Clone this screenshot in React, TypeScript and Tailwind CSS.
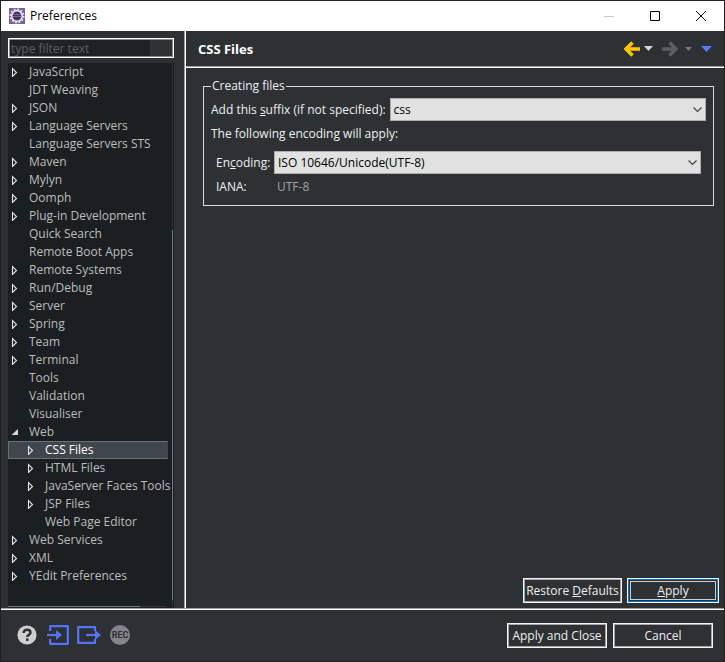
import type { ReactNode } from 'react'

type Node = {
  label: string
  state?: 'closed' | 'open'
  child?: boolean
  selected?: boolean
}

const NODES: Node[] = [
  { label: 'JavaScript', state: 'closed' },
  { label: 'JDT Weaving' },
  { label: 'JSON', state: 'closed' },
  { label: 'Language Servers', state: 'closed' },
  { label: 'Language Servers STS' },
  { label: 'Maven', state: 'closed' },
  { label: 'Mylyn', state: 'closed' },
  { label: 'Oomph', state: 'closed' },
  { label: 'Plug-in Development', state: 'closed' },
  { label: 'Quick Search' },
  { label: 'Remote Boot Apps' },
  { label: 'Remote Systems', state: 'closed' },
  { label: 'Run/Debug', state: 'closed' },
  { label: 'Server', state: 'closed' },
  { label: 'Spring', state: 'closed' },
  { label: 'Team', state: 'closed' },
  { label: 'Terminal', state: 'closed' },
  { label: 'Tools' },
  { label: 'Validation' },
  { label: 'Visualiser' },
  { label: 'Web', state: 'open' },
  { label: 'CSS Files', state: 'closed', child: true, selected: true },
  { label: 'HTML Files', state: 'closed', child: true },
  { label: 'JavaServer Faces Tools', state: 'closed', child: true },
  { label: 'JSP Files', state: 'closed', child: true },
  { label: 'Web Page Editor', child: true },
  { label: 'Web Services', state: 'closed' },
  { label: 'XML', state: 'closed' },
  { label: 'YEdit Preferences', state: 'closed' },
]

function Twisty({ state }: { state?: Node['state'] }) {
  return (
    <svg width="8" height="10" viewBox="0 0 8 10" className="shrink-0">
      {state === 'closed' && <path d="M1.5 1.5v8l4-4z" fill="none" stroke="#e4e4e4" strokeWidth="1.1" />}
      {state === 'open' && <path d="M7 2v6H.5z" fill="#d8d8d8" />}
    </svg>
  )
}

function TreeRow({ node }: { node: Node }) {
  return (
    <li role="treeitem" aria-selected={!!node.selected}>
      <button
        className={`flex h-[18px] w-40 items-center gap-[10px] border text-left leading-4 whitespace-nowrap ${
          node.child ? 'pl-[18px]' : 'pl-[2px]'
        } ${
          node.selected
            ? 'border-[#67737b] border-r-transparent bg-[#3f464c] text-white'
            : 'border-transparent text-[#bdbdbd]'
        }`}
      >
        <Twisty state={node.state} />
        {node.label}
      </button>
    </li>
  )
}

function DialogButton({ children, className }: { children: ReactNode; className: string }) {
  return (
    <button className={`h-[25px] border border-[#f4f4f4] whitespace-nowrap ${className}`}>
      <span className="flex h-full items-center justify-center border border-[#a8a5a2]">
        <span>{children}</span>
      </span>
    </button>
  )
}

function Combo({ id, value }: { id: string; value: string }) {
  return (
    <div className="grid h-[23px] min-w-0 flex-1">
      <select
        id={id}
        className="col-start-1 row-start-1 w-full appearance-none border border-[#adadad] bg-[#e1e1e1] px-[3px] text-black"
      >
        <option>{value}</option>
      </select>
      <svg
        width="9"
        height="6"
        viewBox="0 0 9 6"
        className="pointer-events-none col-start-1 row-start-1 mr-1 self-center justify-self-end"
      >
        <path d="M.5.5l4 4 4-4" fill="none" stroke="#444" strokeWidth="1.2" />
      </svg>
    </div>
  )
}

export default function App() {
  return (
    <div className="flex min-h-screen flex-col border border-[#231f20] bg-[#2d3134] font-['Open_Sans',sans-serif] text-[12px] leading-4 text-[#eeeeee]">
      {/* Title bar */}
      <header className="flex h-[30px] items-center bg-white pl-2 text-black">
        <svg width="16" height="16" viewBox="0 0 16 16">
          <rect width="16" height="16" fill="#75609b" />
          <circle cx="8" cy="8" r="6.6" fill="none" stroke="#e4e0ea" strokeWidth="1.8" strokeDasharray="1.9 1.55" />
          <circle cx="8" cy="8" r="5.2" fill="#40315f" stroke="#efecf3" strokeWidth="1.5" />
          <path d="M4 6.5h8M3.8 8.5h8.4" stroke="#786c96" />
        </svg>
        <h1 className="ml-[5px] flex-1">Preferences</h1>
        <button aria-label="Minimize" className="flex w-[46px] justify-center">
          <svg width="10" height="10" viewBox="0 0 10 10">
            <path d="M0 5.5h10" stroke="#c8c8c8" />
          </svg>
        </button>
        <button aria-label="Maximize" className="flex w-[46px] justify-center">
          <svg width="10" height="10" viewBox="0 0 10 10">
            <path d="M.5.5h9v9h-9z" fill="none" stroke="#000" />
          </svg>
        </button>
        <button aria-label="Close" className="flex w-[46px] justify-center">
          <svg width="10" height="10" viewBox="0 0 10 10">
            <path d="M0 0l10 10M10 0L0 10" stroke="#000" />
          </svg>
        </button>
      </header>

      <div className="flex flex-1">
        {/* Page tree */}
        <aside className="flex w-[184px] shrink-0 flex-col gap-[5px] border-r border-[#a0a0a0] pt-[7px] pr-[10px] pl-[7px]">
          <input
            type="text"
            aria-label="Filter"
            placeholder="type filter text"
            className="h-5 w-full shrink-0 border border-white bg-[linear-gradient(to_right,#1f2224_86%,#2d3134_86%)] px-[2px] shadow-[inset_0_0_0_1px_#8c8c8c] placeholder:text-[#5e5e5e]"
          />
          <div className="flex flex-1 flex-col bg-[#1b1f21] pb-px">
            <div className="flex flex-1">
              <ul role="tree" className="flex-1 pb-[21px]">
                {NODES.map((node) => (
                  <TreeRow key={node.label} node={node} />
                ))}
              </ul>
              <div className="mr-px w-px bg-[#2d3134] pt-[167px] pb-[6px]">
                <div className="h-full bg-[#6f7b83]" />
              </div>
            </div>
            <div className="mr-2 h-px bg-[#33383b]">
              <div className="h-full w-5/6 bg-[#6f7b83]" />
            </div>
          </div>
        </aside>

        {/* Selected page */}
        <main className="flex min-w-0 flex-1 flex-col border-l border-white">
          <div className="flex h-9 items-center border-b border-[#a0a0a0] pr-3 pl-3">
            <h2 className="flex-1 pt-px text-[13px] font-bold text-white">CSS Files</h2>
            <nav className="flex items-center">
              <button aria-label="Back">
                <svg width="16" height="16" viewBox="0 0 16 16">
                  <path d="M8.5 1.5L2 8l6.5 6.5M2.5 8H16" fill="none" stroke="#ffc400" strokeWidth="3.6" />
                </svg>
              </button>
              <button aria-label="Back history" className="ml-1">
                <svg width="9" height="5" viewBox="0 0 9 5">
                  <path d="M0 0h9L4.5 5z" fill="#d4d6d8" />
                </svg>
              </button>
              <button aria-label="Forward" className="ml-[9px]">
                <svg width="16" height="16" viewBox="0 0 16 16">
                  <path d="M7.5 1.5L14 8l-6.5 6.5M13.5 8H0" fill="none" stroke="#5a5d65" strokeWidth="3.6" />
                </svg>
              </button>
              <button aria-label="Forward history" className="ml-[7px]">
                <svg width="7" height="4" viewBox="0 0 7 4">
                  <path d="M0 0h7L3.5 4z" fill="#777" />
                </svg>
              </button>
              <button aria-label="View menu" className="ml-[9px]">
                <svg width="11" height="6" viewBox="0 0 11 6">
                  <path d="M0 0h11L5.5 6z" fill="#5a78ff" />
                </svg>
              </button>
            </nav>
          </div>

          <div className="flex flex-1 flex-col justify-between border-t border-white pt-[10px] pb-[5px]">
            <fieldset className="mr-[10px] ml-[17px] min-w-0 border border-[#dcdcdc] px-[7px] pb-[10px]">
              <legend className="px-px">Creating files</legend>
              <div className="mt-1 flex items-center gap-1">
                <label htmlFor="suffix">
                  Add this <u>s</u>uffix (if not specified):
                </label>
                <Combo id="suffix" value="css" />
              </div>
              <p className="mt-[5px]">The following encoding will apply:</p>
              <div className="mt-[9px] flex items-center gap-1 px-[5px]">
                <label htmlFor="encoding" className="w-[54px] whitespace-nowrap">
                  En<u>c</u>oding:
                </label>
                <Combo id="encoding" value="ISO 10646/Unicode(UTF-8)" />
              </div>
              <div className="mt-[5px] flex gap-[7px] px-[5px]">
                <span className="w-[54px]">IANA:</span>
                <span className="text-[#a0a3a5]">UTF-8</span>
              </div>
            </fieldset>

            <div className="flex justify-end gap-[5px] pr-[5px]">
              <DialogButton className="w-[99px]">
                Restore <u>D</u>efaults
              </DialogButton>
              <button className="h-[25px] w-[92px] border border-[#f4f4f4]">
                <span className="flex h-full border border-[#0078d7] p-px">
                  <span className="flex flex-1 items-center justify-center border border-[#d0cdca]">
                    <span>
                      <u>A</u>pply
                    </span>
                  </span>
                </span>
              </button>
            </div>
          </div>
        </main>
      </div>

      <footer className="border-t border-[#a0a0a0]">
        <div className="flex h-[52px] items-center justify-between border-t border-white pr-[11px] pl-4">
          <div className="flex items-center pb-[2px]">
            <button aria-label="Help">
              <svg width="20" height="20" viewBox="0 0 20 20">
                <circle cx="10" cy="10" r="9.6" fill="#cfcfcf" />
                <path
                  d="M6.6 8c0-2.1 1.4-3.3 3.4-3.3s3.5 1.2 3.5 2.9c0 2.2-3.2 2.2-3.2 4.4"
                  fill="none"
                  stroke="#2d3134"
                  strokeWidth="2.5"
                />
                <path d="M9 13.4h2.6v2.5H9z" fill="#2d3134" />
              </svg>
            </button>
            <button aria-label="Import" className="ml-[10px]">
              <svg
                width="22"
                height="20"
                viewBox="0 0 22 20"
                fill="none"
                stroke="#5472fb"
                strokeWidth="2.2"
                strokeLinejoin="round"
              >
                <path d="M3.2 6V1.2h17.6v17.6H3.2V14" />
                <path d="M0 10h12" />
                <path d="M9 5l6 5-6 5z" fill="#5472fb" stroke="none" />
              </svg>
            </button>
            <button aria-label="Export" className="ml-2">
              <svg
                width="24"
                height="20"
                viewBox="0 0 24 20"
                fill="none"
                stroke="#5472fb"
                strokeWidth="2.2"
                strokeLinejoin="round"
              >
                <path d="M18 6V2.2H1.2v15.6H18V14" />
                <path d="M9 10h11" />
                <path d="M18 5l6 5-6 5z" fill="#5472fb" stroke="none" />
              </svg>
            </button>
            <button
              aria-label="Record"
              className="ml-[9px] flex size-5 items-center justify-center rounded-full bg-[#848484] font-['Liberation_Sans_Narrow','Roboto',sans-serif] text-[9px] font-bold text-[#2d3134]"
            >
              REC
            </button>
          </div>
          <div className="flex gap-[6px]">
            <DialogButton className="w-[100px]">Apply and Close</DialogButton>
            <DialogButton className="w-[100px]">Cancel</DialogButton>
          </div>
        </div>
      </footer>
    </div>
  )
}
